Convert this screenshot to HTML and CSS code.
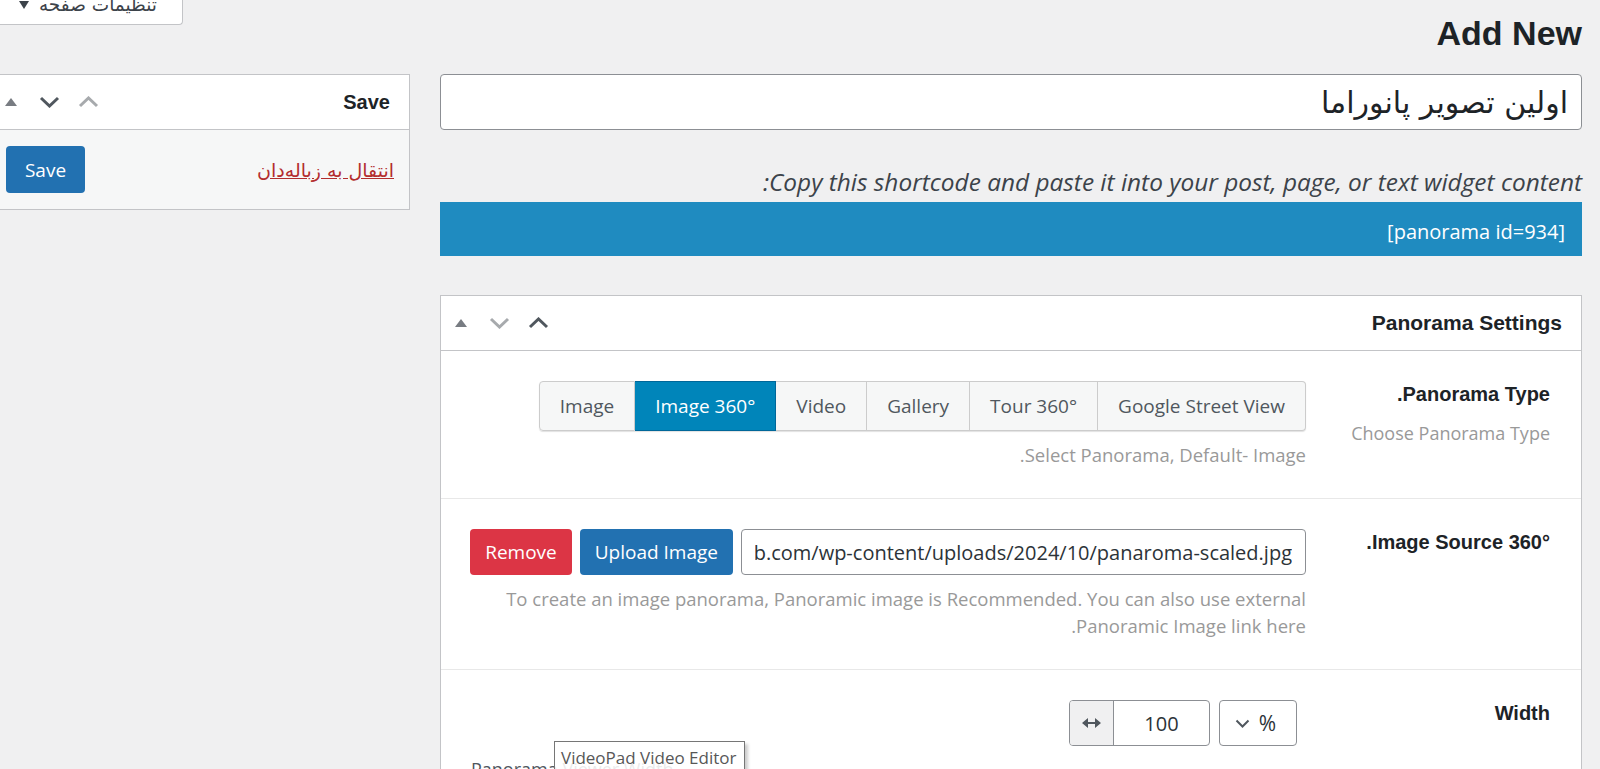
FILE: index.html
```html
<!DOCTYPE html>
<html lang="fa" dir="rtl">
<head>
    <meta charset="UTF-8">
    <meta name="viewport" content="width=device-width, initial-scale=1.0">
    <title>Add New</title>
    <link rel="stylesheet" href="styles.css">
</head>
<body>
    <div class="wrap">
        <div class="main-col">
            <h1 class="page-title">Add New</h1>
            <input class="title-input" type="text" value="اولین تصویر پانوراما">
            <p class="shortcode-hint">Copy this shortcode and paste it into your post, page, or text widget content:</p>
            <div class="shortcode">[panorama id=934]</div>

            <div class="postbox settings-box">
                <div class="postbox-header">
                    <h2>Panorama Settings</h2>
                    <div class="handles">
                        <span class="handle"><svg width="12" height="8" viewBox="0 0 12 8"><path d="M6 0 12 8H0z" fill="#787c82"/></svg></span>
                        <span class="handle"><svg width="21" height="12" viewBox="0 0 21 12"><path d="M2 2l8.5 8 8.5-8" fill="none" stroke="#a7aaad" stroke-width="3"/></svg></span>
                        <span class="handle"><svg width="21" height="12" viewBox="0 0 21 12"><path d="M2 10l8.5-8 8.5 8" fill="none" stroke="#50575e" stroke-width="3"/></svg></span>
                    </div>
                </div>

                <div class="field-row">
                    <div class="field-label">
                        <h3>Panorama Type.</h3>
                        <p>Choose Panorama Type</p>
                    </div>
                    <div class="field-body">
                        <div class="type-group">
                            <span>Image</span>
                            <span class="active">Image 360°</span>
                            <span>Video</span>
                            <span>Gallery</span>
                            <span>Tour 360°</span>
                            <span>Google Street View</span>
                        </div>
                        <p class="desc">Select Panorama, Default- Image.</p>
                    </div>
                </div>

                <div class="field-row">
                    <div class="field-label">
                        <h3>Image Source 360°.</h3>
                    </div>
                    <div class="field-body">
                        <div class="source-controls">
                            <input class="url-input" type="text" dir="rtl" value="https://panorama-lab.com/wp-content/uploads/2024/10/panaroma-scaled.jpg">
                            <button class="btn btn-blue">Upload Image</button>
                            <button class="btn btn-red">Remove</button>
                        </div>
                        <p class="desc">To create an image panorama, Panoramic image is Recommended. You can also use external Panoramic Image link here.</p>
                    </div>
                </div>

                <div class="field-row">
                    <div class="field-label">
                        <h3>Width</h3>
                    </div>
                    <div class="field-body">
                        <div class="size-controls">
                            <div class="unit-select">
                                <span>%</span>
                                <svg width="15" height="9" viewBox="0 0 15 9"><path d="M1.5 1.5l6 6 6-6" fill="none" stroke="#50575e" stroke-width="2"/></svg>
                            </div>
                            <div class="num-group">
                                <span class="num-input">100</span>
                                <span class="num-addon"><svg width="19" height="10" viewBox="0 0 19 10"><path d="M0 5 6 0v10zM19 5l-6-5v10z" fill="#50575e"/><rect x="4" y="4" width="11" height="2" fill="#50575e"/></svg></span>
                            </div>
                        </div>
                        <p class="sub-label">Panorama Viewer Width</p>
                    </div>
                </div>
            </div>
        </div>

        <div class="side-col">
            <div class="screen-tab">
                <span>تنظیمات صفحه</span>
                <svg width="10" height="8" viewBox="0 0 10 8"><path d="M0 0h10L5 8z" fill="#3c434a"/></svg>
            </div>
            <div class="postbox save-box">
                <div class="postbox-header">
                    <h2>Save</h2>
                    <div class="handles">
                        <span class="handle"><svg width="12" height="8" viewBox="0 0 12 8"><path d="M6 0 12 8H0z" fill="#787c82"/></svg></span>
                        <span class="handle"><svg width="21" height="12" viewBox="0 0 21 12"><path d="M2 2l8.5 8 8.5-8" fill="none" stroke="#50575e" stroke-width="3"/></svg></span>
                        <span class="handle"><svg width="21" height="12" viewBox="0 0 21 12"><path d="M2 10l8.5-8 8.5 8" fill="none" stroke="#a7aaad" stroke-width="3"/></svg></span>
                    </div>
                </div>
                <div class="save-body">
                    <a class="trash-link" href="#">انتقال به زباله‌دان</a>
                    <button class="btn btn-save">Save</button>
                </div>
            </div>
        </div>
    </div>

    <div class="tooltip">VideoPad Video Editor</div>
</body>
</html>
```

FILE: styles.css
```css
html, body {
    overflow: hidden;
}
body {
    margin: 0;
    padding: 0;
    background: #f0f0f1;
    color: #1d2327;
    font-family: "Open Sans", "DejaVu Sans", sans-serif;
    font-size: 18px;
}
.wrap {
    display: flex;
    gap: 30px;
    padding-right: 18px;
}
.main-col {
    flex: 1;
    min-width: 0;
}
.side-col {
    width: 420px;
    flex-shrink: 0;
    margin-left: -10px;
}

/* title area */
.page-title {
    margin: 0 0 18px;
    padding-top: 11px;
    line-height: 45px;
    font-family: "Liberation Sans", Arial, sans-serif;
    font-size: 34px;
    font-weight: bold;
}
.title-input {
    display: block;
    width: 100%;
    height: 56px;
    box-sizing: border-box;
    padding: 0 13px;
    border: 1px solid #8c8f94;
    border-radius: 4px;
    background: #fff;
    color: #1d2327;
    font-family: "DejaVu Sans", sans-serif;
    font-size: 30px;
}
.shortcode-hint {
    margin: 38px 0 6px;
    font-style: italic;
    font-size: 24.4px;
    line-height: 28px;
    color: #3c434a;
}
.shortcode {
    height: 54px;
    box-sizing: border-box;
    padding: 5px 17px 0;
    line-height: 49px;
    background: #1f8bc0;
    color: #fff;
    font-size: 20px;
}

/* boxes */
.postbox {
    background: #fff;
    border: 1px solid #c3c4c7;
}
.settings-box {
    margin-top: 39px;
}
.postbox-header {
    display: flex;
    align-items: center;
    justify-content: space-between;
    height: 54px;
    padding-right: 19px;
    border-bottom: 1px solid #c3c4c7;
}
.postbox-header h2 {
    margin: 0;
    font-family: "Liberation Sans", Arial, sans-serif;
    font-size: 21px;
    font-weight: bold;
}
.save-box .postbox-header h2 {
    font-size: 20px;
}
.handles {
    display: flex;
    direction: ltr;
}
.handle {
    width: 39px;
    height: 54px;
    display: flex;
    align-items: center;
    justify-content: center;
}

/* settings rows */
.field-row {
    display: flex;
    gap: 31px;
    padding: 30px 31px 30px 30px;
    border-top: 1px solid #e8e8e8;
}
.postbox-header + .field-row {
    border-top: 0;
}
.field-label {
    width: 213px;
    flex-shrink: 0;
}
.field-label h3 {
    margin: 0;
    line-height: 26px;
    font-family: "Liberation Sans", Arial, sans-serif;
    font-size: 20px;
    font-weight: bold;
}
.field-label p {
    margin: 13px 0 0;
    line-height: 26px;
    color: #999;
}
.field-body {
    flex: 1;
    min-width: 0;
    display: flex;
    flex-direction: column;
    align-items: flex-start;
}
.desc {
    margin: 10px 0 0;
    line-height: 27px;
    color: #999;
    font-size: 18.5px;
}

.type-group {
    display: flex;
    direction: ltr;
    border-radius: 4px;
    box-shadow: 0 1px 1px rgba(0, 0, 0, 0.12);
}
.type-group span {
    height: 50px;
    box-sizing: border-box;
    display: flex;
    align-items: center;
    padding: 0 20px;
    background: #f6f7f7;
    border: 1px solid #ccc;
    border-left: 0;
    color: #50575e;
    font-size: 19px;
    white-space: nowrap;
}
.type-group span:first-child {
    border-left: 1px solid #ccc;
    border-radius: 4px 0 0 4px;
}
.type-group span:last-child {
    border-radius: 0 4px 4px 0;
}
.type-group span.active {
    background: #0085ba;
    border-color: #006799;
    color: #fff;
}

.source-controls {
    display: flex;
    gap: 8px;
}
.url-input {
    width: 565px;
    height: 46px;
    box-sizing: border-box;
    padding: 0 13px;
    border: 1px solid #8c8f94;
    border-radius: 4px;
    color: #2c3338;
    font-family: "Open Sans", sans-serif;
    font-size: 20px;
}
.btn {
    height: 46px;
    padding: 0 15px;
    border: 0;
    border-radius: 4px;
    color: #fff;
    font-family: "Open Sans", sans-serif;
    font-size: 19px;
    white-space: nowrap;
    flex-shrink: 0;
}
.btn-blue {
    background: #2271b1;
}
.btn-red {
    background: #dc3545;
}

.size-controls {
    display: flex;
    gap: 9px;
    margin-right: 9px;
}
.unit-select {
    display: flex;
    align-items: center;
    gap: 9px;
    width: 78px;
    height: 46px;
    box-sizing: border-box;
    padding: 0 20px 0 12px;
    border: 1px solid #8c8f94;
    border-radius: 4px;
    font-size: 21px;
    color: #2c3338;
}
.num-group {
    display: flex;
    height: 46px;
    box-sizing: border-box;
    border: 1px solid #8c8f94;
    border-radius: 4px;
    overflow: hidden;
}
.num-input {
    width: 95px;
    display: flex;
    align-items: center;
    justify-content: center;
    font-size: 20px;
    color: #2c3338;
}
.num-addon {
    width: 43px;
    display: flex;
    align-items: center;
    justify-content: center;
    background: #f0f0f1;
    border-right: 1px solid #8c8f94;
}
.sub-label {
    align-self: stretch;
    margin: 10px 0 0;
    line-height: 26px;
    text-align: left;
    color: #50575e;
}

/* sidebar */
.screen-tab {
    display: flex;
    align-items: center;
    justify-content: space-between;
    width: 193px;
    height: 40px;
    box-sizing: border-box;
    margin-top: -15px;
    margin-right: auto;
    padding: 0 25px 0 28px;
    background: #fff;
    border: 1px solid #c3c4c7;
    border-top: 0;
    border-radius: 0 0 4px 4px;
    color: #3c434a;
    font-family: "DejaVu Sans", sans-serif;
    font-size: 18.5px;
}
.save-box {
    margin-top: 49px;
}
.save-body {
    display: flex;
    align-items: center;
    justify-content: space-between;
    padding: 16px 15px;
    background: #f6f7f7;
}
.trash-link {
    color: #b32d2e;
    font-family: "DejaVu Sans", sans-serif;
    font-size: 19px;
}
.btn-save {
    width: 79px;
    height: 47px;
    padding: 0;
    background: #2271b1;
}

.tooltip {
    position: absolute;
    left: 554px;
    top: 741px;
    width: 191px;
    height: 40px;
    box-sizing: border-box;
    padding: 4px 6px;
    line-height: 24px;
    background: rgba(255, 255, 255, 0.88);
    border: 1px solid #767676;
    box-shadow: 3px 3px 3px rgba(0, 0, 0, 0.2);
    color: #575757;
    font-size: 17px;
    direction: ltr;
}
```
